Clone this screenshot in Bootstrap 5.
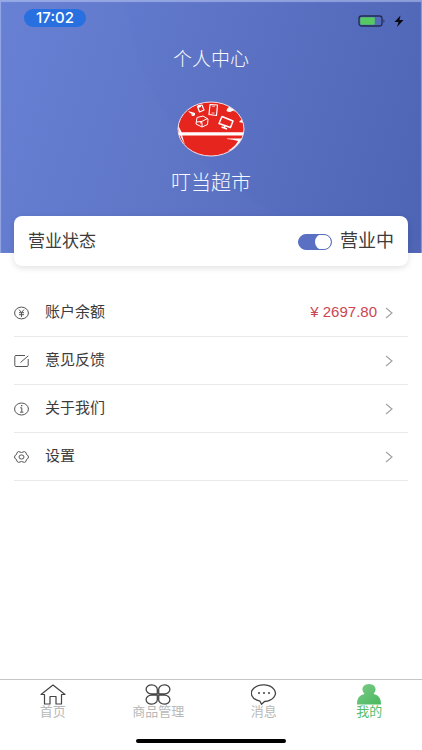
<!DOCTYPE html>
<html lang="zh-CN">
<head>
<meta charset="utf-8">
<meta name="viewport" content="width=device-width, initial-scale=1">
<title>个人中心</title>
<link href="https://cdn.jsdelivr.net/npm/bootstrap@5.3.0/dist/css/bootstrap.min.css" rel="stylesheet">
<style>
  body { font-family: "Liberation Sans", "Noto Sans CJK SC", sans-serif; color: #3c3c3c; background: #fff; }
  svg { display: block; flex-shrink: 0; }
  .hero {
    color: #f8f9fe;
    padding-bottom: 57px;
    background:
      radial-gradient(circle at 94% -12%, transparent 270px, rgba(255,255,255,.012) 274px),
      linear-gradient(108deg, #667fd3 0%, #5d74c6 45%, #4d63b4 100%);
    box-shadow: inset 0 1px 1px 1px rgba(200,212,250,.5);
  }
  .status-bar { height: 44px; padding: 9px 18px 0 24px; }
  .clock { width: 62px; height: 18px; line-height: 18px; font-family: Inter, sans-serif; font-size: 15px; font-weight: 500; background: #286fe0; }
  .page-title { font-size: 19px; line-height: 32px; }
  .avatar { margin-top: 25px; }
  .shop-name { font-size: 20px; line-height: 26px; margin-top: 13px; }
  .state-card { margin: -37px 14px 0; height: 50px; padding: 0 14px; border-radius: 8px; box-shadow: 0 2px 6px rgba(0,0,0,.12); }
  .state-label { font-size: 17px; line-height: 24px; padding-top: 2px; }
  .state-value { font-size: 18px; line-height: 24px; }
  .form-check-input.state-switch { width: 34px; height: 16px; margin: 2px 8px 0 0; border: 1px solid #5a70c2; background-size: 16px 16px; }
  .form-check-input.state-switch:checked { background-color: #5a70c2; border-color: #5a70c2;
    background-image: url("data:image/svg+xml,%3csvg xmlns='http://www.w3.org/2000/svg' viewBox='0 0 16 16'%3e%3ccircle cx='8' cy='8' r='8' fill='%23fff'/%3e%3c/svg%3e"); }
  .menu { margin: 23px 14px 0; }
  .menu-row { height: 48px; font-size: 15px; color: #3c3c3c; border-bottom: 1px solid #e9e9e9; padding-right: 15px; }
  .menu-row svg { fill: none; stroke: #555; }
  .menu-row .chevron { stroke: #a3a3a3; }
  .balance { color: #cb4653; }
  .tab-bar { border-top: 1px solid #c6c6c6; height: 60px; }
  .tab-link { font-size: 13px; line-height: 14px; color: #b9b9b9; padding-top: 4px; }
  .tab-link svg { fill: none; stroke: #444; }
  .tab-link.current { color: #58be6c; }
  .home-bar { width: 150px; height: 4px; background: #000; margin-bottom: 7px; }
</style>
<script src="https://cdn.jsdelivr.net/npm/bootstrap@5.3.0/dist/js/bootstrap.bundle.min.js"></script>
</head>
<body class="d-flex flex-column min-vh-100">
<header class="hero d-flex flex-column">
  <div class="status-bar d-flex justify-content-between">
    <div class="clock rounded-pill text-center text-white">17:02</div>
    <div class="d-flex align-items-start gap-2 pt-1">
      <svg width="28" height="16" viewBox="0 0 28 16" aria-label="电量"><rect x="1" y="3" width="23" height="10" rx="2.5" fill="none" stroke="#202c52" stroke-width="1.3"/><rect x="2.3" y="4.3" width="14.5" height="7.4" rx="1" fill="#56c963"/><path d="M25.5 6.2q2 1.8 0 3.6z" fill="#202c52"/></svg>
      <svg width="10" height="16" viewBox="0 0 10 16" aria-label="充电中"><path d="M6.5 2.5 0.5 9H4.5L3 14 9.5 7H5.5Z" fill="#080a10"/></svg>
    </div>
  </div>
  <h1 class="page-title fw-light text-center mb-0">个人中心</h1>
  <div class="avatar align-self-center">
    <svg width="68" height="56" viewBox="0 0 68 56" aria-label="店铺头像">
      <defs><clipPath id="disc"><ellipse cx="34" cy="28" rx="33" ry="27"/></clipPath></defs>
      <ellipse cx="34" cy="28" rx="33" ry="27" fill="#e6251f"/>
      <g clip-path="url(#disc)" fill="none" stroke="#fff" stroke-width="1.2" stroke-linejoin="round">
        <path d="M0 32.8H68" stroke-width="3.2"/>
        <path d="M0 22Q2 34 8 44L5 34V32L2 26Z" fill="#fff" stroke="none"/>
        <path d="M50 37.5H66L58 50 51 49.500Q58 46 61 40Q56 38.5 50 38Z" fill="#fff" stroke="none"/>
        <path d="M33 3.500 40.500 4 39.500 14.500 32 13.500Z"/><path d="M35 5.200h3M34.500 12h3" stroke-width=".7"/>
        <path d="M20.5 5.5 25 4 27 9 22.5 11Z"/><path d="M20.500 4.500 23.500 3.500 24 6 21 7Z" fill="#fff" stroke="none"/>
        <path d="M11 10 18 12 18 14.500 13 12Z" fill="#fff" stroke="none"/><circle cx="16" cy="13.500" r="1"/>
        <path d="M50 9 53 5 57 8Q54 12 50 10ZM50 8 58 10" fill="#fff" stroke-width=".8"/>
        <path d="M20 16.500 26 15 31 18 30.500 23.500 25 26 19 23ZM19.5 21Q25 21.500 30.5 17.500M25 25.500V21.500L23 22" stroke-width="1"/>
        <path d="M45 15.5 56 20 53.5 26.5 42 22.5Z" stroke-width="1.5"/><path d="M48 25 47 27M44.500 26 50 28" stroke-width="1.7"/>
        <path d="M62 21 65 18 66 22Z" fill="#fff" stroke="none"/>
      </g>
      <ellipse cx="34" cy="28" rx="33" ry="27" fill="none" stroke="#f1dfe8"/>
    </svg>
  </div>
  <div class="shop-name fw-light text-center">叮当超市</div>
</header>

<main class="flex-grow-1">
  <section class="state-card bg-white d-flex align-items-center position-relative">
    <span class="state-label me-auto">营业状态</span>
    <div class="form-switch d-flex align-items-center p-0">
      <input class="form-check-input state-switch" type="checkbox" role="switch" id="openState" checked>
      <label class="state-value" for="openState">营业中</label>
    </div>
  </section>

  <nav class="menu d-flex flex-column" aria-label="账户菜单">
    <a href="#" class="menu-row d-flex align-items-center text-decoration-none">
      <svg class="me-3" width="15" height="14" viewBox="0 0 15 14"><ellipse cx="7.5" cy="7" rx="6.9" ry="5.9"/><path d="M5 3.6 7.5 6.5 10 3.6M7.5 6.5V11M5 6.7h5M5 8.7h5"/></svg>
      <span class="me-auto">账户余额</span>
      <span class="balance me-2">¥ 2697.80</span>
      <svg class="chevron" width="8" height="12" viewBox="0 0 8 12"><path d="M1 1 7 6 1 11" stroke-width="1.2"/></svg>
    </a>
    <a href="#" class="menu-row d-flex align-items-center text-decoration-none">
      <svg class="me-3" width="15" height="14" viewBox="0 0 15 14"><path d="M11 1.5H2Q.8 1.5.8 2.7V11.3Q.8 12.5 2 12.5H13Q14.2 12.5 14.2 11.3V5M6.5 8.5 14.3 1.8"/></svg>
      <span class="me-auto">意见反馈</span>
      <svg class="chevron" width="8" height="12" viewBox="0 0 8 12"><path d="M1 1 7 6 1 11" stroke-width="1.2"/></svg>
    </a>
    <a href="#" class="menu-row d-flex align-items-center text-decoration-none">
      <svg class="me-3" width="15" height="14" viewBox="0 0 15 14"><ellipse cx="7.5" cy="7" rx="6.9" ry="6"/><path d="M6.2 5.8h1.6V10M6 10.2h3.4"/><path d="M7 3.6h1.4" stroke-width="1.4"/></svg>
      <span class="me-auto">关于我们</span>
      <svg class="chevron" width="8" height="12" viewBox="0 0 8 12"><path d="M1 1 7 6 1 11" stroke-width="1.2"/></svg>
    </a>
    <a href="#" class="menu-row d-flex align-items-center text-decoration-none">
      <svg class="me-3" width="15" height="14" viewBox="0 0 15 14"><path d="M4.6 1.6Q7.5 3.4 10.4 1.6L12 2.6Q11.8 4.8 14.3 5.8V8.2Q11.8 9.2 12 11.4L10.4 12.4Q7.5 10.6 4.6 12.4L3 11.4Q3.2 9.2.7 8.2V5.8Q3.2 4.8 3 2.6Z" stroke-linejoin="round"/><ellipse cx="7.5" cy="7" rx="2.5" ry="2.1"/></svg>
      <span class="me-auto">设置</span>
      <svg class="chevron" width="8" height="12" viewBox="0 0 8 12"><path d="M1 1 7 6 1 11" stroke-width="1.2"/></svg>
    </a>
  </nav>
</main>

<footer>
  <nav class="tab-bar d-flex" aria-label="主导航">
    <a href="#" class="tab-link flex-fill w-25 d-flex flex-column align-items-center text-decoration-none">
      <svg width="26" height="21" viewBox="0 0 26 21"><path d="M13 1 1 10.5H4.5V20H10V12.5H16V20H21.500V10.5H25Z" stroke-width="1.2" stroke-linejoin="round"/></svg>首页</a>
    <a href="#" class="tab-link flex-fill w-25 d-flex flex-column align-items-center text-decoration-none">
      <svg width="26" height="21" viewBox="0 0 26 21"><path d="M12.300 9.800H6.500A5.600 4.500 0 1 1 12.300 5.300ZM13.700 9.800V5.300A5.600 4.500 0 1 1 19.500 9.800ZM12.300 11.200V15.700A5.600 4.500 0 1 1 6.500 11.200ZM13.700 11.200H19.500A5.600 4.500 0 1 1 13.700 15.700Z" stroke-width="1.300" stroke-linejoin="round"/></svg>商品管理</a>
    <a href="#" class="tab-link flex-fill w-25 d-flex flex-column align-items-center text-decoration-none">
      <svg width="26" height="21" viewBox="0 0 26 21"><path d="M9 17.200A12 8.300 0 1 1 13.500 17.500L10.500 20.200Z" stroke-width="1.3" stroke-linejoin="round"/><path d="M7 9h2M12 9h2M17 9h2" stroke-width="1.7"/></svg>消息</a>
    <a href="#" class="tab-link current flex-fill w-25 d-flex flex-column align-items-center text-decoration-none" aria-current="page">
      <svg width="26" height="21" viewBox="0 0 26 21"><defs><linearGradient id="leaf" x2="1" y2="1"><stop stop-color="#7ccb86"/><stop offset="1" stop-color="#48b85f"/></linearGradient></defs><path d="M13 0C17.500 0 20 3 19.500 6.200Q19 8.500 17.500 10C22 11 25 13.500 25 20.500H1C1 13.500 4 11 8.500 10Q7 8.500 6.500 6.200C6 3 8.500 0 13 0Z" fill="url(#leaf)" stroke="none"/></svg>我的</a>
  </nav>
  <div class="home-bar rounded-pill mx-auto"></div>
</footer>
</body>
</html>
